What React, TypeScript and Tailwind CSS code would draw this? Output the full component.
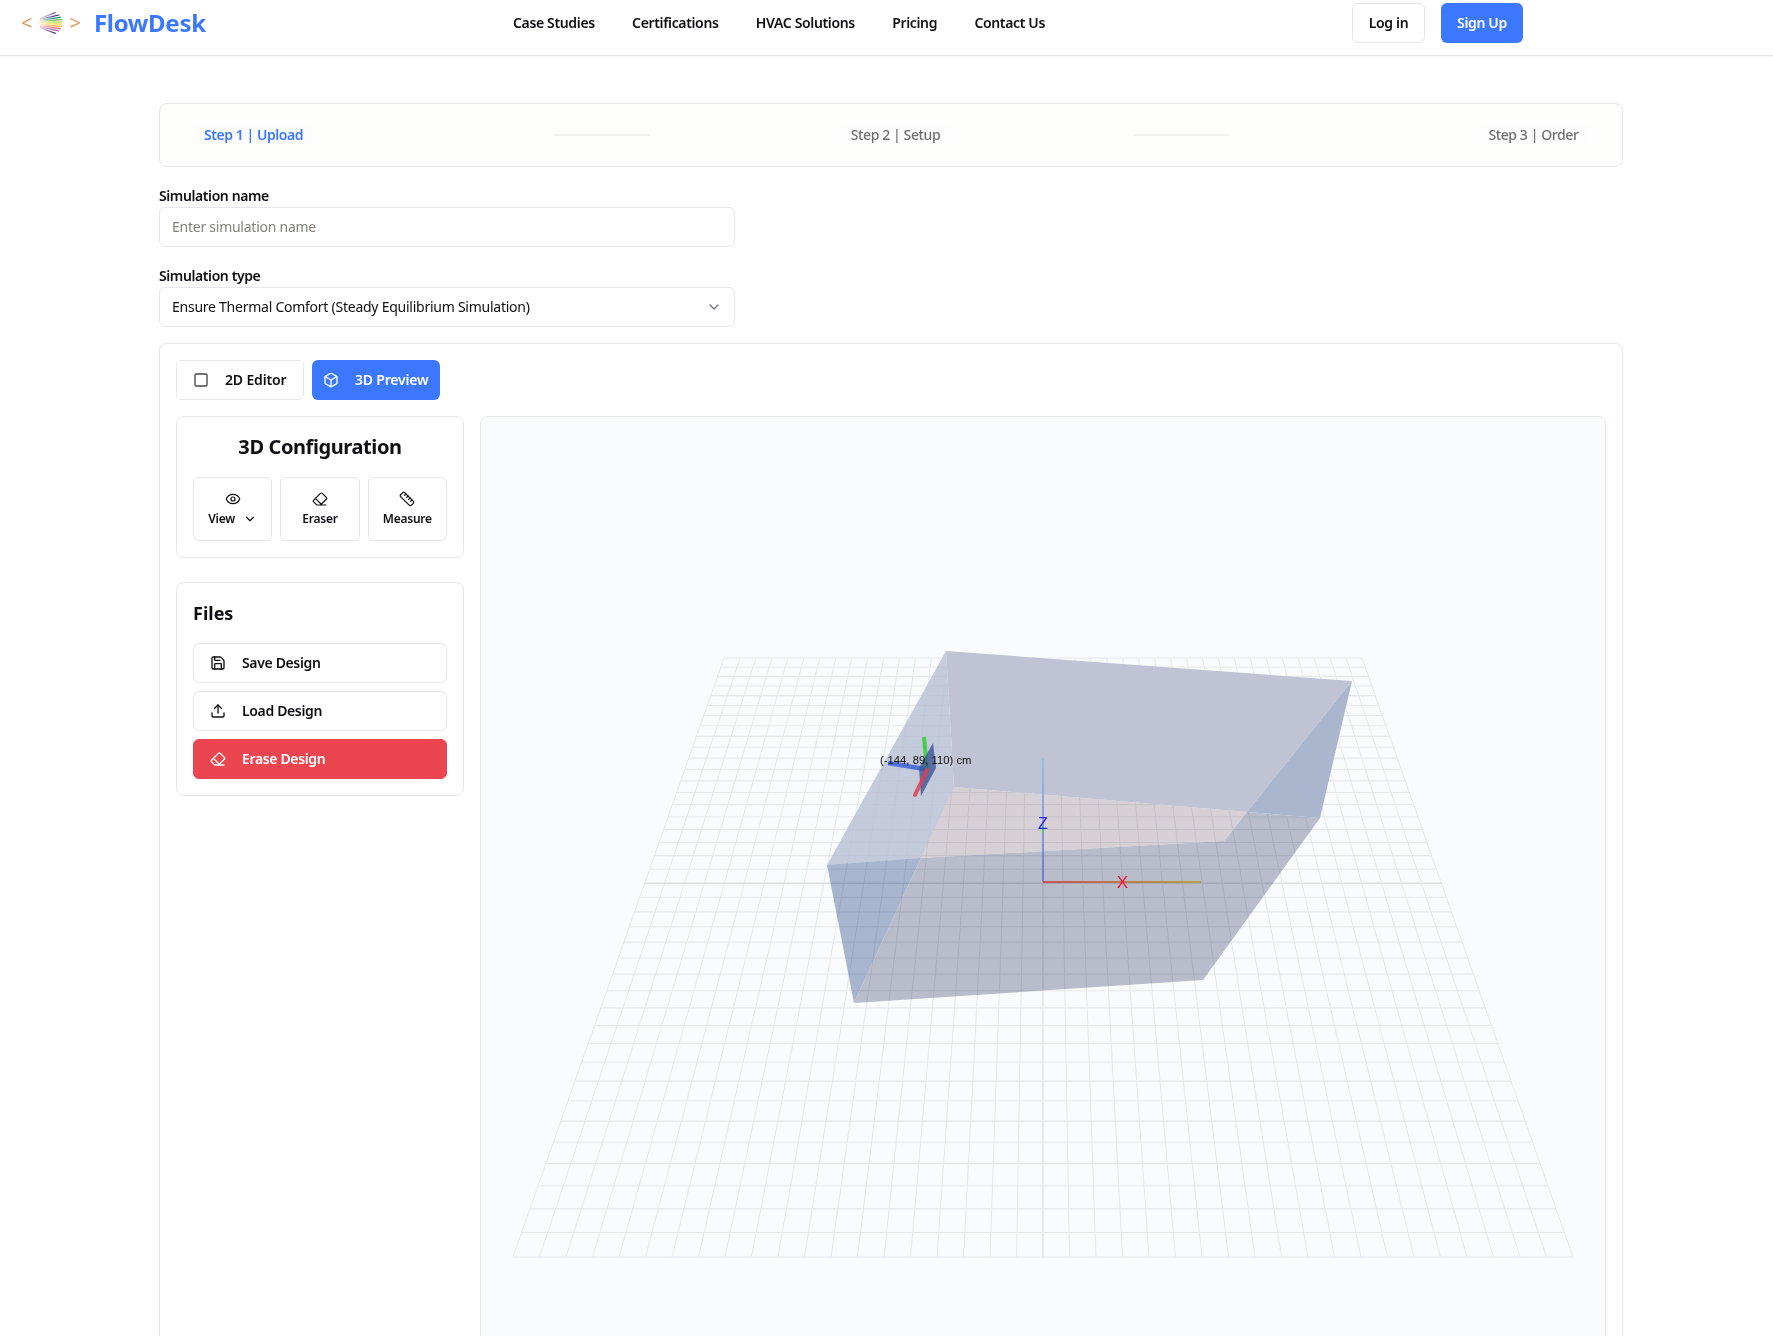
import React from "react";
import { ChevronDown, Eye, Eraser, Ruler, Save, Upload, Square, Box } from "lucide-react";

const font = "[font-family:'Noto_Sans',sans-serif]";

function Logo() {
  const colors = ["#7a4fa8", "#3b2a86", "#1f8f7a", "#5fb84a", "#b8d83a", "#f0d83a", "#f4a63a", "#e8607a", "#a03f9a", "#4b2a86"];
  return (
    <svg width="24" height="24" viewBox="0 0 24 24" className="shrink-0">
      <defs>
        <clipPath id="ball"><circle cx="12" cy="12" r="11.5" /></clipPath>
        <linearGradient id="fade" x1="0" y1="0" x2="1" y2="0">
          <stop offset="0" stopColor="#fff3ee" stopOpacity="0.95" />
          <stop offset="0.65" stopColor="#ffffff" stopOpacity="0" />
        </linearGradient>
      </defs>
      <g clipPath="url(#ball)">
        {colors.map((c, i) => {
          const k = -0.95 + (i * 1.9) / (colors.length - 1);
          const ye = 12 + 11.5 * k;
          const xe = 12 + 11.5 * Math.sqrt(1 - k * k);
          const ys = 12 + 5 * k;
          const xs = 12 - 11.5 * Math.sqrt(1 - 0.2 * k * k);
          return <path key={i} d={`M${xs} ${ys}L${xe + 2} ${ye}`} fill="none" stroke={c} strokeWidth="1.25" />;
        })}
        <circle cx="12" cy="12" r="11.5" fill="url(#fade)" />
      </g>
    </svg>
  );
}

function Scene() {
  const TOP = 658, BOT = 1257, CX = 1043, WT = 638, WB = 1060;
  const N = 40;
  const lines: React.ReactNode[] = [];
  for (let i = 0; i <= N; i++) {
    const t = i / N;
    const w = 1 / ((1 - t) / WT + t / WB);
    const y = TOP + ((w - WT) / (WB - WT)) * (BOT - TOP);
    lines.push(<line key={"h" + i} x1={CX - w / 2} x2={CX + w / 2} y1={y} y2={y} stroke={i === 20 ? "#d6d9dd" : "#e6e8eb"} strokeWidth={i % 2 ? 1 : 1.2} />);
    const u = (i - 20) / 20;
    lines.push(<line key={"v" + i} x1={CX + (u * WT) / 2} x2={CX + (u * WB) / 2} y1={TOP} y2={BOT} stroke={i === 20 ? "#dfe1e4" : "#e6e8eb"} strokeWidth={i === 20 ? 1.4 : 1} />);
  }
  const A = "946,651", B = "1352,681", C = "1320,818", D = "1203,980", E = "854,1003", F = "827,865", G = "954,787", H = "1224,841", P = "921,858", Q = "1247,812";
  return (
    <svg viewBox="480 416 1126 1000" width="1126" height="1000" className="block">
      <defs>
        <linearGradient id="zAxis" x1="0" y1="882" x2="0" y2="758" gradientUnits="userSpaceOnUse">
          <stop offset="0" stopColor="#5566d8" />
          <stop offset="1" stopColor="#72c6e4" />
        </linearGradient>
        <linearGradient id="xAxis" x1="1043" y1="0" x2="1201" y2="0" gradientUnits="userSpaceOnUse">
          <stop offset="0" stopColor="#d0302c" />
          <stop offset="1" stopColor="#b89a10" />
        </linearGradient>
      </defs>
      {lines}
      <polygon points={`${A} ${F} ${P} ${G}`} fill="#b8bfd4" fillOpacity="0.82" />
      <g className="mix-blend-multiply">
        <polygon points={`${G} ${Q} ${H} ${P}`} fill="#dcd5da" />
        <polygon points={`${P} ${H} ${Q} ${C} ${D} ${E}`} fill="#bcbfce" />
        <polygon points={`${F} ${P} ${E}`} fill="#abb8d2" />
      </g>
      <polygon points={`${A} ${B} ${Q} ${G}`} fill="#bfc3d3" />
      <polygon points={`${B} ${C} ${Q}`} fill="#a9b6ce" />
      <line x1="1043" y1="882" x2="1043" y2="758" stroke="url(#zAxis)" strokeWidth="1.4" />
      <line x1="1043" y1="882" x2="1201" y2="882" stroke="url(#xAxis)" strokeWidth="1.4" />
      <line x1="1043" y1="826" x2="1043" y2="833" stroke="#3fd43f" strokeWidth="1.6" />
      <text x="1043" y="829" textAnchor="middle" fontSize="16" fill="#2a1ee8" fontFamily="'Liberation Sans', sans-serif">Z</text>
      <text x="1122.5" y="888" textAnchor="middle" fontSize="17" fill="#f01030" fontFamily="'Liberation Sans', sans-serif">X</text>
      <line x1="924" y1="737" x2="927" y2="770" stroke="#45d045" strokeWidth="4" />
      <line x1="888" y1="763" x2="925" y2="769" stroke="#4f72e0" strokeWidth="4.5" />
      <polygon points="933,743 936,768 921,796 919,768" fill="#3c5596" fillOpacity="0.8" />
      <line x1="915" y1="795" x2="927" y2="770" stroke="#e2404f" strokeWidth="4" strokeLinecap="round" strokeOpacity="0.85" />
      <text x="880" y="764" fontSize="11.3" fill="#111" fontFamily="'Liberation Sans', sans-serif">(-144, 89, 110) cm</text>
    </svg>
  );
}

function ToolButton({ icon, label, chevron }: { icon: React.ReactNode; label: string; chevron?: boolean }) {
  return (
    <button className="flex h-16 flex-1 flex-col items-center justify-center rounded-md border border-[#e5e7eb] bg-white text-xs font-semibold tracking-[-0.25px] text-[#0f0f14]">
      {icon}
      <span className="mt-1 flex items-center gap-2 leading-4">
        {label}
        {chevron && <ChevronDown size={14} strokeWidth={2} />}
      </span>
    </button>
  );
}

function FileButton({ icon, label, danger }: { icon: React.ReactNode; label: string; danger?: boolean }) {
  return (
    <button className={`flex h-10 w-full items-center gap-4 rounded-md border pl-4 text-sm font-semibold tracking-[-0.35px] ${danger ? "border-[#eb4650] bg-[#eb4650] text-white" : "border-[#e5e7eb] bg-white text-[#0f0f14]"}`}>
      {icon}
      {label}
    </button>
  );
}

export default function App() {
  return (
    <div className={`h-screen overflow-hidden bg-white text-[#0f0f14] ${font}`}>
      <header className="flex h-14 items-start border-b border-[#e5e5e5] pt-[3px] shadow-[0_1px_2px_rgba(0,0,0,0.05)]">
        <div className="ml-[21px] flex h-10 w-[188px] items-center">
          <span className="text-xl font-normal text-[#e09a5a]">&lt;</span>
          <span className="ml-[7px]"><Logo /></span>
          <span className="ml-[6px] text-xl font-normal text-[#e09a5a]">&gt;</span>
          <span className="ml-[13px] text-2xl font-bold tracking-[-0.3px] text-[#3b78ff]">FlowDesk</span>
        </div>
        <nav className="ml-[304px] flex h-10 w-[532px] items-center justify-between text-sm font-semibold tracking-[-0.35px]">
          <a>Case Studies</a>
          <a>Certifications</a>
          <a>HVAC Solutions</a>
          <a>Pricing</a>
          <a>Contact Us</a>
        </nav>
        <div className="ml-[307px] flex items-center gap-4 tracking-[-0.35px]">
          <button className="h-10 w-[73px] rounded-md border border-[#e5e7eb] bg-white text-sm font-semibold">Log in</button>
          <button className="h-10 w-[82px] rounded-md bg-[#3b78ff] text-sm font-semibold text-white">Sign Up</button>
        </div>
      </header>

      <main className="mx-[159px] w-[1464px] pt-[47px]">
        <div className="flex h-16 items-center rounded-lg border border-[#e5e7eb] bg-[#fefefc] px-[33px] text-sm tracking-[-0.4px]">
          <span className="w-[121px] shrink-0 bg-[#fdfdfd] text-center font-semibold tracking-[-0.45px] text-[#3b78ff]">Step 1 | Upload</span>
          <span className="ml-[240px] h-0.5 w-24 shrink-0 bg-[#f1f1ef]" />
          <span className="ml-[190px] w-[111px] shrink-0 bg-[#fdfdfd] text-center font-medium text-[#6f6f72]">Step 2 | Setup</span>
          <span className="ml-[182px] h-0.5 w-24 shrink-0 bg-[#f1f1ef]" />
          <span className="ml-auto w-[111px] shrink-0 bg-[#fdfdfd] text-center font-medium text-[#6f6f72]">Step 3 | Order</span>
        </div>

        <label className="mt-[19px] block text-sm leading-5 font-semibold tracking-[-0.4px]">Simulation name</label>
        <div className="mt-[1px] flex h-10 w-[576px] items-center rounded-md border border-[#e5e7eb] px-3 text-sm tracking-[-0.25px] text-[#857f78]">Enter simulation name</div>
        <label className="mt-[19px] block text-sm leading-5 font-semibold tracking-[-0.4px]">Simulation type</label>
        <div className="mt-[1px] flex h-10 w-[576px] items-center justify-between rounded-md border border-[#e5e7eb] px-3 text-sm tracking-[-0.25px]">
          Ensure Thermal Comfort (Steady Equilibrium Simulation)
          <ChevronDown size={16} className="text-[#6b7280]" />
        </div>

        <section className="mt-4 rounded-t-lg border border-b-0 border-[#e5e7eb] bg-white px-4 pt-4 pb-4">
          <div className="flex gap-2">
            <button className="flex h-10 w-[128px] items-center gap-[16px] rounded-md border border-[#e5e7eb] pl-[16px] text-sm font-semibold tracking-[-0.15px]">
              <Square size={16} strokeWidth={2} className="text-[#444]" />2D Editor
            </button>
            <button className="flex h-10 w-[128px] items-center gap-[16px] rounded-md bg-[#3b78ff] pl-[11px] text-sm font-semibold tracking-[-0.2px] text-white">
              <Box size={16} strokeWidth={2} />3D Preview
            </button>
          </div>
          <div className="mt-4 flex gap-4">
            <aside className="w-[288px] shrink-0">
              <div className="h-[142px] rounded-lg border border-[#e5e7eb] px-4 pt-4">
                <h2 className="text-center text-xl leading-7 font-bold tracking-[-0.4px]">3D Configuration</h2>
                <div className="mt-4 flex gap-2">
                  <ToolButton icon={<Eye size={16} strokeWidth={1.8} />} label="View" chevron />
                  <ToolButton icon={<Eraser size={16} strokeWidth={1.8} />} label="Eraser" />
                  <ToolButton icon={<Ruler size={16} strokeWidth={1.8} />} label="Measure" />
                </div>
              </div>
              <div className="mt-6 h-[214px] rounded-lg border border-[#e5e7eb] px-4 pt-4">
                <h2 className="text-lg leading-7 font-bold">Files</h2>
                <div className="mt-4 flex flex-col gap-2">
                  <FileButton icon={<Save size={16} strokeWidth={2} />} label="Save Design" />
                  <FileButton icon={<Upload size={16} strokeWidth={2} />} label="Load Design" />
                  <FileButton icon={<Eraser size={16} strokeWidth={2} />} label="Erase Design" danger />
                </div>
              </div>
            </aside>
            <div className="h-[1000px] flex-1 overflow-hidden rounded-lg border border-[#e5e7eb] bg-[#fafbfc]">
              <div className="-m-px"><Scene /></div>
            </div>
          </div>
        </section>
      </main>
    </div>
  );
}
